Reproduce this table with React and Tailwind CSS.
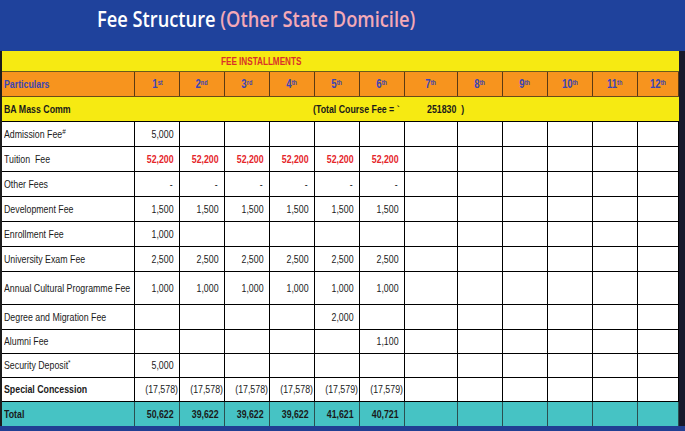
import React from "react";

const COLS = "grid grid-cols-[133px_repeat(6,45px)_53px_repeat(4,45px)_41px]";
const ORD = ["st", "nd", "rd", "th", "th", "th", "th", "th", "th", "th", "th", "th"];

const rows = [
  { label: "Admission Fee", sup: "#", vals: ["5,000"], h: "h-[25px]" },
  { label: "Tuition  Fee", vals: Array(6).fill("52,200"), red: true, h: "h-[25px]" },
  { label: "Other Fees", vals: Array(6).fill("-"), h: "h-[25px]", dash: true },
  { label: "Development Fee", vals: Array(6).fill("1,500"), h: "h-[25px]" },
  { label: "Enrollment Fee", vals: ["1,000"], h: "h-[25px]" },
  { label: "University Exam Fee", vals: Array(6).fill("2,500"), h: "h-[25px]" },
  { label: "Annual Cultural Programme Fee", vals: Array(6).fill("1,000"), h: "h-[33px]" },
  { label: "Degree and Migration Fee", vals: ["", "", "", "", "2,000"], h: "h-[25px]" },
  { label: "Alumni Fee", vals: ["", "", "", "", "", "1,100"], h: "h-[24px]" },
  { label: "Security Deposit", sup: "*", vals: ["5,000"], h: "h-[24px]" },
  {
    label: "Special Concession",
    bold: true,
    paren: true,
    vals: ["(17,578)", "(17,578)", "(17,578)", "(17,578)", "(17,579)", "(17,579)"],
    h: "h-[24px]",
  },
];

const totals = ["50,622", "39,622", "39,622", "39,622", "41,621", "40,721"];

function Txt({ children, origin = "origin-left", className = "" }) {
  return (
    <span className={`inline-block whitespace-pre scale-x-[0.8] ${origin} ${className}`}>
      {children}
    </span>
  );
}

function FeeRow({ row }) {
  const cells = Array.from({ length: 12 }, (_, i) => row.vals[i] || "");
  return (
    <div className={`${COLS} ${row.h} bg-white text-[11px] text-[#1a1a1a]`}>
      <div className="flex items-center pl-[2px] border-r border-b border-black">
        <Txt className={row.bold ? "font-bold" : ""}>
          {row.label}
          {row.sup && <sup className="text-[8px]">{row.sup}</sup>}
        </Txt>
      </div>
      {cells.map((v, i) => (
        <div
          key={i}
          className={`flex items-center justify-end border-r border-b border-black ${
            row.paren ? "pr-[1px]" : row.dash ? "pr-[6px]" : "pr-[5px]"
          }`}
        >
          {v && (
            <Txt origin="origin-right" className={row.red ? "font-bold text-[#e5252a]" : ""}>
              {v}
            </Txt>
          )}
        </div>
      ))}
    </div>
  );
}

export default function App() {
  return (
    <div className="w-[685px] h-[431px] bg-[#1f429c] font-['Liberation_Sans',Arial,sans-serif] overflow-hidden">
      <div className="h-[51px] pl-[97px] pt-[3px]">
        <h1 className="font-['Open_Sans',sans-serif] font-semibold text-[22px] leading-[30px] whitespace-nowrap">
          <span className="inline-block origin-left scale-x-[0.83]">
            <span className="text-white">Fee Structure </span>
            <span className="text-[#f3a9b6]">(Other State Domicile)</span>
          </span>
        </h1>
      </div>

      <div className="flex">
        <div className="w-[679px] border-l-2 border-[#1c1c1c]">
          <div className="h-[21px] bg-[#f6ea12] border-b border-[#6a5a1c] flex items-center pl-[219px] text-[11px] font-bold text-[#d9322a]">
            <span className="inline-block origin-left scale-x-[0.74]">FEE INSTALLMENTS</span>
          </div>

          <div className={`${COLS} h-[25px] bg-[#f7941e] border-b border-[#6a4a18] text-[#3b45b3] font-bold`}>
            <div className="flex items-center pl-[2px] border-r border-[#5a3a12] text-[11px]">
              <Txt>Particulars</Txt>
            </div>
            {ORD.map((s, i) => (
              <div key={i} className="flex items-center justify-center border-r border-[#5a3a12] text-[12px]">
                <Txt origin="origin-center">
                  {i + 1}
                  <sup className="text-[7px]">{s}</sup>
                </Txt>
              </div>
            ))}
          </div>

          <div className="h-[25px] bg-[#f6ea12] border-b border-black flex items-center text-[11px] font-bold text-[#1a1a1a]">
            <div className="w-[311px] pl-[2px]">
              <Txt>BA Mass Comm</Txt>
            </div>
            <div className="w-[114px]">
              <Txt>(Total Course Fee = `</Txt>
            </div>
            <Txt>251830  )</Txt>
          </div>

          {rows.map((r, i) => (
            <FeeRow key={i} row={r} />
          ))}

          <div className={`${COLS} h-[24px] bg-[#46c3c4] text-[11px] font-bold text-[#1a1a1a]`}>
            <div className="flex items-center pl-[2px] border-r border-[#2b4f50]">
              <Txt>Total</Txt>
            </div>
            {Array.from({ length: 12 }, (_, i) => (
              <div key={i} className="flex items-center justify-end pr-[5px] border-r border-[#2b4f50]">
                {totals[i] && <Txt origin="origin-right">{totals[i]}</Txt>}
              </div>
            ))}
          </div>
        </div>
        <div className="w-[6px] bg-[#17192c]" />
      </div>
      <div className="h-[5px] bg-[#213f93]" />
    </div>
  );
}
